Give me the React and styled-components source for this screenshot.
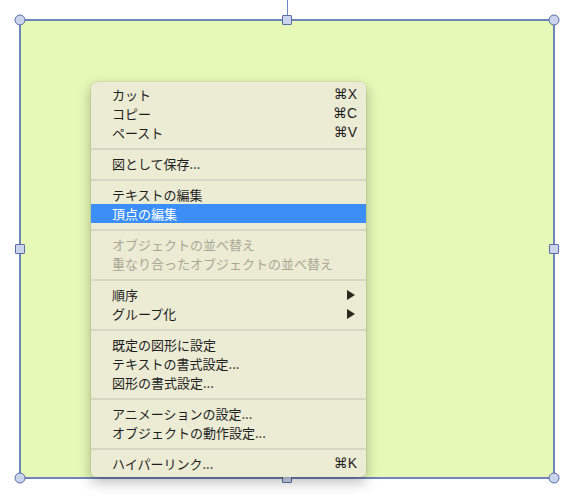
import React from 'react';
import styled, { createGlobalStyle } from 'styled-components';

const GlobalStyle = createGlobalStyle`
  html, body {
    margin: 0;
    padding: 0;
    background: #ffffff;
  }
  body {
    font-family: "Noto Sans CJK JP", "Noto Sans", sans-serif;
  }
`;

const Page = styled.div`
  width: 574px;
  height: 496px;
  padding: 19px 0 0 19px;
  box-sizing: border-box;
  overflow: hidden;
`;

const Shape = styled.div`
  position: relative;
  width: 536px;
  height: 460px;
  box-sizing: border-box;
  background: #e6f9b6;
  border: 2px solid #7084b8;
`;

const RotateLine = styled.div`
  position: absolute;
  left: 266px;
  top: -21px;
  width: 1px;
  height: 16px;
  background: #6d86c6;
`;

const Handle = styled.div`
  position: absolute;
  width: ${(p) => (p.$round ? '11px' : '10px')};
  height: ${(p) => (p.$round ? '11px' : '10px')};
  box-sizing: border-box;
  background: #cad4ec;
  border: 1px solid #5a6fa8;
  border-radius: ${(p) => (p.$round ? '50%' : '1px')};
  transform: translate(-50%, -50%);
  left: ${(p) => p.$x};
  top: ${(p) => p.$y};
`;

const Menu = styled.div`
  position: absolute;
  left: 70px;
  top: 61px;
  width: 275px;
  box-sizing: border-box;
  padding: 3px 0 4px;
  background: #ecebd4;
  border-radius: 5px;
  box-shadow: 0 0 0 0.5px rgba(0, 0, 0, 0.12), 0 5px 14px rgba(0, 0, 0, 0.28);
  z-index: 2;
`;

const Item = styled.div`
  display: flex;
  align-items: center;
  height: 19px;
  padding: 0 9px 0 21px;
  font-size: 13px;
  line-height: 19px;
  color: ${(p) => (p.$disabled ? '#a9a895' : p.$active ? '#ffffff' : '#1e1e1e')};
  background: ${(p) => (p.$active ? '#3b8ef5' : 'transparent')};
  white-space: nowrap;
`;

const Label = styled.span`
  flex: 1;
  margin-top: -1px;
`;

const Shortcut = styled.span`
  font-family: "Liberation Sans", "DejaVu Sans", sans-serif;
  font-size: 14px;
`;

const Arrow = styled.span`
  width: 0;
  height: 0;
  margin-right: 2px;
  border-top: 5px solid transparent;
  border-bottom: 5px solid transparent;
  border-left: 8px solid #2a2a20;
`;

const Separator = styled.div`
  height: 2px;
  margin: 6px 0 4px;
  background: #d8d6c2;
`;

const groups = [
  [
    { label: 'カット', key: '⌘X' },
    { label: 'コピー', key: '⌘C' },
    { label: 'ペースト', key: '⌘V' },
  ],
  [{ label: '図として保存...' }],
  [{ label: 'テキストの編集' }, { label: '頂点の編集', active: true }],
  [
    { label: 'オブジェクトの並べ替え', disabled: true },
    { label: '重なり合ったオブジェクトの並べ替え', disabled: true },
  ],
  [
    { label: '順序', sub: true },
    { label: 'グループ化', sub: true },
  ],
  [
    { label: '既定の図形に設定' },
    { label: 'テキストの書式設定...' },
    { label: '図形の書式設定...' },
  ],
  [{ label: 'アニメーションの設定...' }, { label: 'オブジェクトの動作設定...' }],
  [{ label: 'ハイパーリンク...', key: '⌘K' }],
];

const handles = [
  { x: '-1px', y: '-1px', round: true },
  { x: '50%', y: '-1px' },
  { x: 'calc(100% + 1px)', y: '-1px', round: true },
  { x: '-1px', y: '50%' },
  { x: 'calc(100% + 1px)', y: '50%' },
  { x: '-1px', y: 'calc(100% + 1px)', round: true },
  { x: '50%', y: 'calc(100% + 1px)' },
  { x: 'calc(100% + 1px)', y: 'calc(100% + 1px)', round: true },
];

const App = () => {
  return (
    <>
      <GlobalStyle />
      <Page>
        <Shape>
          <RotateLine />
          {handles.map((h, i) => (
            <Handle key={i} $x={h.x} $y={h.y} $round={h.round} />
          ))}
          <Menu>
            {groups.map((group, gi) => (
              <React.Fragment key={gi}>
                {gi > 0 && <Separator />}
                {group.map((item) => (
                  <Item key={item.label} $active={item.active} $disabled={item.disabled}>
                    <Label>{item.label}</Label>
                    {item.key && <Shortcut>{item.key}</Shortcut>}
                    {item.sub && <Arrow />}
                  </Item>
                ))}
              </React.Fragment>
            ))}
          </Menu>
        </Shape>
      </Page>
    </>
  );
};

export default App;
